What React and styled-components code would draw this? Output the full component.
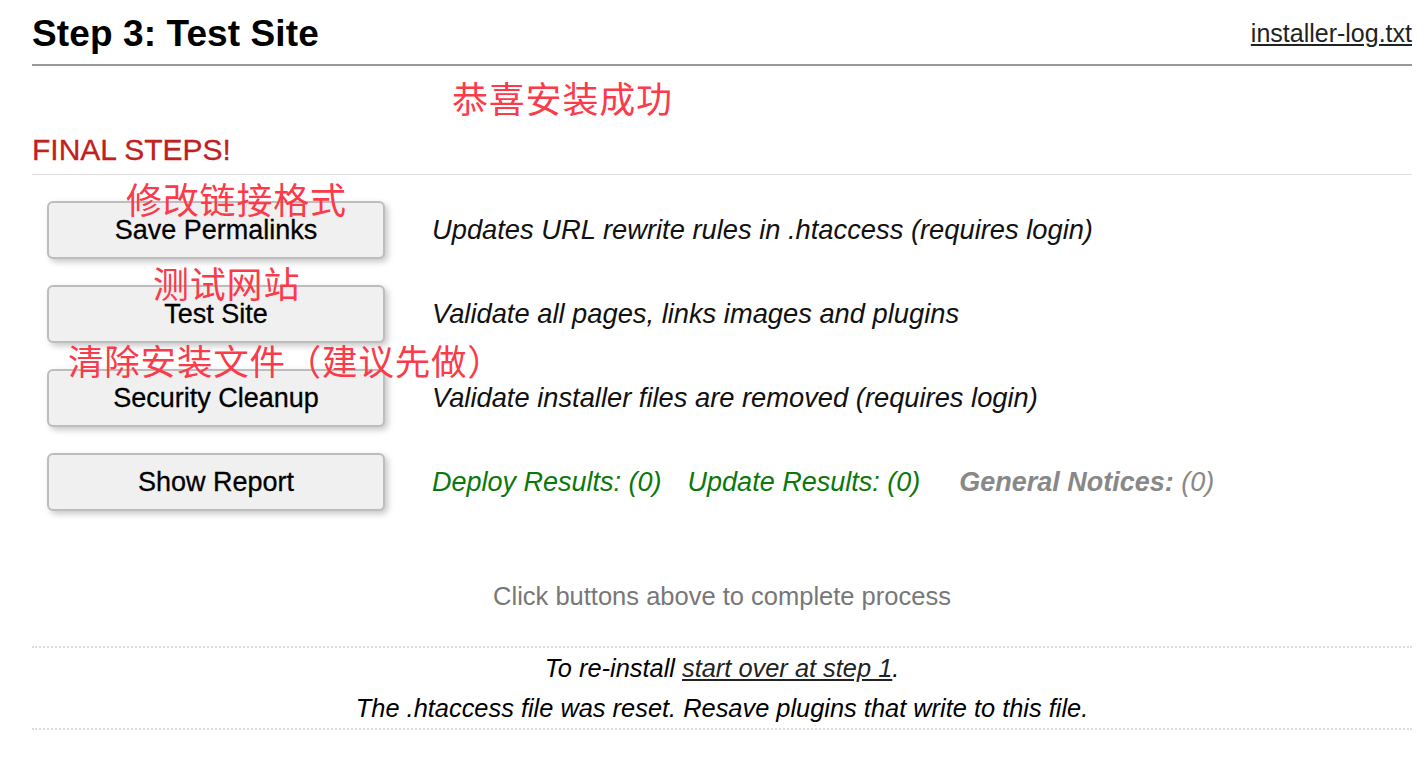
import React from "react";
import styled, { createGlobalStyle } from "styled-components";

const GlobalStyle = createGlobalStyle`
  body {
    margin: 0;
    background: #fff;
    font-family: "Liberation Sans", Arial, sans-serif;
    color: #000;
  }
`;

const steps = [
  {
    label: "Save Permalinks",
    text: "Updates URL rewrite rules in .htaccess (requires login)",
  },
  { label: "Test Site", text: "Validate all pages, links images and plugins" },
  {
    label: "Security Cleanup",
    text: "Validate installer files are removed (requires login)",
  },
];

const notes = [
  { text: "恭喜安装成功", left: 452, top: 79, size: 36 },
  { text: "修改链接格式", left: 126, top: 180, size: 36 },
  { text: "测试网站", left: 153, top: 264, size: 36 },
  { text: "清除安装文件（建议先做）", left: 68, top: 342, size: 35.5 },
];

const App = () => {
  return (
    <Page>
      <GlobalStyle />
      <Header>
        <Title>Step 3: Test Site</Title>
        <LogLink href="#">installer-log.txt</LogLink>
      </Header>

      <SectionTitle>FINAL STEPS!</SectionTitle>

      <StepList>
        {steps.map((s) => (
          <StepRow key={s.label}>
            <StepButton>{s.label}</StepButton>
            <StepText>{s.text}</StepText>
          </StepRow>
        ))}
        <StepRow>
          <StepButton>Show Report</StepButton>
          <Results>
            <Result $color="#0b780b" $space={26}>
              Deploy Results: (0)
            </Result>
            <Result $color="#0b780b" $space={39}>
              Update Results: (0)
            </Result>
            <Result $color="#888">
              <b>General Notices:</b> (0)
            </Result>
          </Results>
        </StepRow>
      </StepList>

      <Hint>Click buttons above to complete process</Hint>

      <Footer>
        <div>
          To re-install <FooterLink href="#">start over at step 1</FooterLink>.
        </div>
        <div>The .htaccess file was reset. Resave plugins that write to this file.</div>
      </Footer>

      {notes.map((n) => (
        <Note key={n.text} style={{ left: n.left, top: n.top, fontSize: n.size }}>
          {n.text}
        </Note>
      ))}
    </Page>
  );
};

const Page = styled.div`
  position: relative;
  padding: 0 12px 40px 32px;
  min-height: 770px;
  box-sizing: border-box;
`;

const Header = styled.div`
  display: flex;
  justify-content: space-between;
  align-items: flex-end;
  padding: 12px 0 9px 0;
  border-bottom: 2px solid #999;
`;

const Title = styled.h1`
  margin: 0;
  font-size: 37px;
  line-height: 43px;
  font-weight: 700;
  letter-spacing: 0.1px;
`;

const LogLink = styled.a`
  font-size: 25px;
  line-height: 30px;
  color: #222;
  text-decoration: underline;
  margin-bottom: 7px;
`;

const SectionTitle = styled.h2`
  margin: 66px 0 0 0;
  padding-bottom: 6px;
  font-size: 30px;
  line-height: 36px;
  font-weight: 400;
  color: #c0201e;
  border-bottom: 1px solid #ddd;
  -webkit-text-stroke: 0.3px #c0201e;
`;

const StepList = styled.div`
  display: flex;
  flex-direction: column;
  gap: 26px;
  margin-top: 26px;
  padding-left: 15px;
`;

const StepRow = styled.div`
  display: flex;
  align-items: center;
  gap: 47px;
`;

const StepButton = styled.button`
  width: 338px;
  height: 58px;
  flex-shrink: 0;
  background: #f0f0f0;
  border: 2px solid #bdbdbd;
  border-radius: 6px;
  box-shadow: 3px 3px 6px rgba(0, 0, 0, 0.22);
  font-family: "Liberation Sans", Arial, sans-serif;
  font-size: 27px;
  color: #000;
  cursor: pointer;
  -webkit-text-stroke: 0.3px #000;
`;

const StepText = styled.div`
  font-size: 27.3px;
  font-style: italic;
  color: #111;
`;

const Results = styled.div`
  display: flex;
  font-size: 27px;
  font-style: italic;
`;

const Result = styled.span`
  color: ${(p) => p.$color};
  margin-right: ${(p) => p.$space || 0}px;

  b {
    font-weight: 700;
  }
`;

const Hint = styled.div`
  margin-top: 70px;
  text-align: center;
  font-size: 25.5px;
  line-height: 30px;
  color: #777;
`;

const Footer = styled.div`
  margin-top: 35px;
  border-top: 2px dotted #ddd;
  border-bottom: 2px dotted #ddd;
  text-align: center;
  font-size: 25.4px;
  line-height: 40px;
  font-style: italic;
  color: #000;
`;

const FooterLink = styled.a`
  color: #222;
  text-decoration: underline;
`;

const Note = styled.div`
  position: absolute;
  font-family: "Noto Sans CJK SC", sans-serif;
  line-height: 1;
  letter-spacing: 0.8px;
  color: #fb3a4a;
  white-space: nowrap;
  pointer-events: none;
`;

export default App;
